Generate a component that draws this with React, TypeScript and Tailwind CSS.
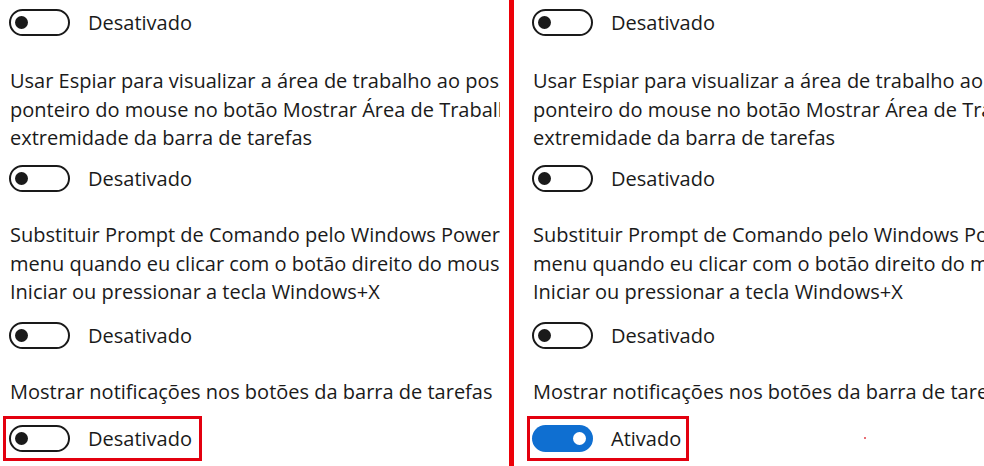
const ITEMS = [
  {
    lines: [
      "Usar Espiar para visualizar a área de trabalho ao posicionar o",
      "ponteiro do mouse no botão Mostrar Área de Trabalho na",
      "extremidade da barra de tarefas",
    ],
    gap: "mt-[31px] mb-[12.5px]",
  },
  {
    lines: [
      "Substituir Prompt de Comando pelo Windows PowerShell no",
      "menu quando eu clicar com o botão direito do mouse no botão",
      "Iniciar ou pressionar a tecla Windows+X",
    ],
    gap: "mt-[29px] mb-[15.5px]",
  },
];

function Toggle({ on }: { on: boolean }) {
  return (
    <div className="flex items-center gap-[18px]">
      {on ? (
        <div className="w-[61px] h-[27px] rounded-full bg-[#0f6fd1] flex items-center justify-end pr-[7px]">
          <div className="w-[13px] h-[13px] rounded-full bg-white" />
        </div>
      ) : (
        <div className="w-[61px] h-[27px] rounded-full border-[2.5px] border-[#1a1a1a] flex items-center pl-[4px]">
          <div className="w-[13px] h-[13px] rounded-full bg-[#1a1a1a]" />
        </div>
      )}
      <span className="leading-[27px]">{on ? "Ativado" : "Desativado"}</span>
    </div>
  );
}

function Panel({ on, right }: { on: boolean; right?: boolean }) {
  return (
    <div
      className={`overflow-hidden ${right ? "flex-1 pl-[18px]" : "w-[500px] pl-[9px]"} pt-[9px]`}
    >
      <div className="w-[640px] text-[20px] leading-[28.5px] text-[#1a1a1a]">
        <Toggle on={false} />
        {ITEMS.map((item) => (
          <div key={item.lines[0]}>
            <p className={`${item.gap} pl-[1px] whitespace-nowrap`}>
              {item.lines.map((line) => (
                <span key={line} className="block">
                  {line}
                </span>
              ))}
            </p>
            <Toggle on={false} />
          </div>
        ))}
        <p className="mt-[28.5px] pl-[1px] whitespace-nowrap">
          Mostrar notificações nos botões da barra de tarefas
        </p>
        <div
          className={`mt-[10px] inline-flex items-center border-[3px] border-[#e3000f] py-[6px] ${
            right ? "-ml-[5px] pl-[2px] pr-[5px]" : "-ml-[6px] pl-[3px] pr-[7px]"
          }`}
        >
          <Toggle on={on} />
        </div>
      </div>
    </div>
  );
}

export default function App() {
  return (
    <div
      className="relative w-[984px] h-[466px] bg-white flex overflow-hidden"
      style={{ fontFamily: '"Open Sans", "Noto Sans", sans-serif' }}
    >
      <Panel on={false} />
      <div className="ml-[9px] w-[5px] bg-[#ec0008]" />
      <Panel on right />
      <div className="absolute left-[864px] top-[437px] w-[2px] h-[2px] bg-[#e0303a] opacity-70" />
    </div>
  );
}
